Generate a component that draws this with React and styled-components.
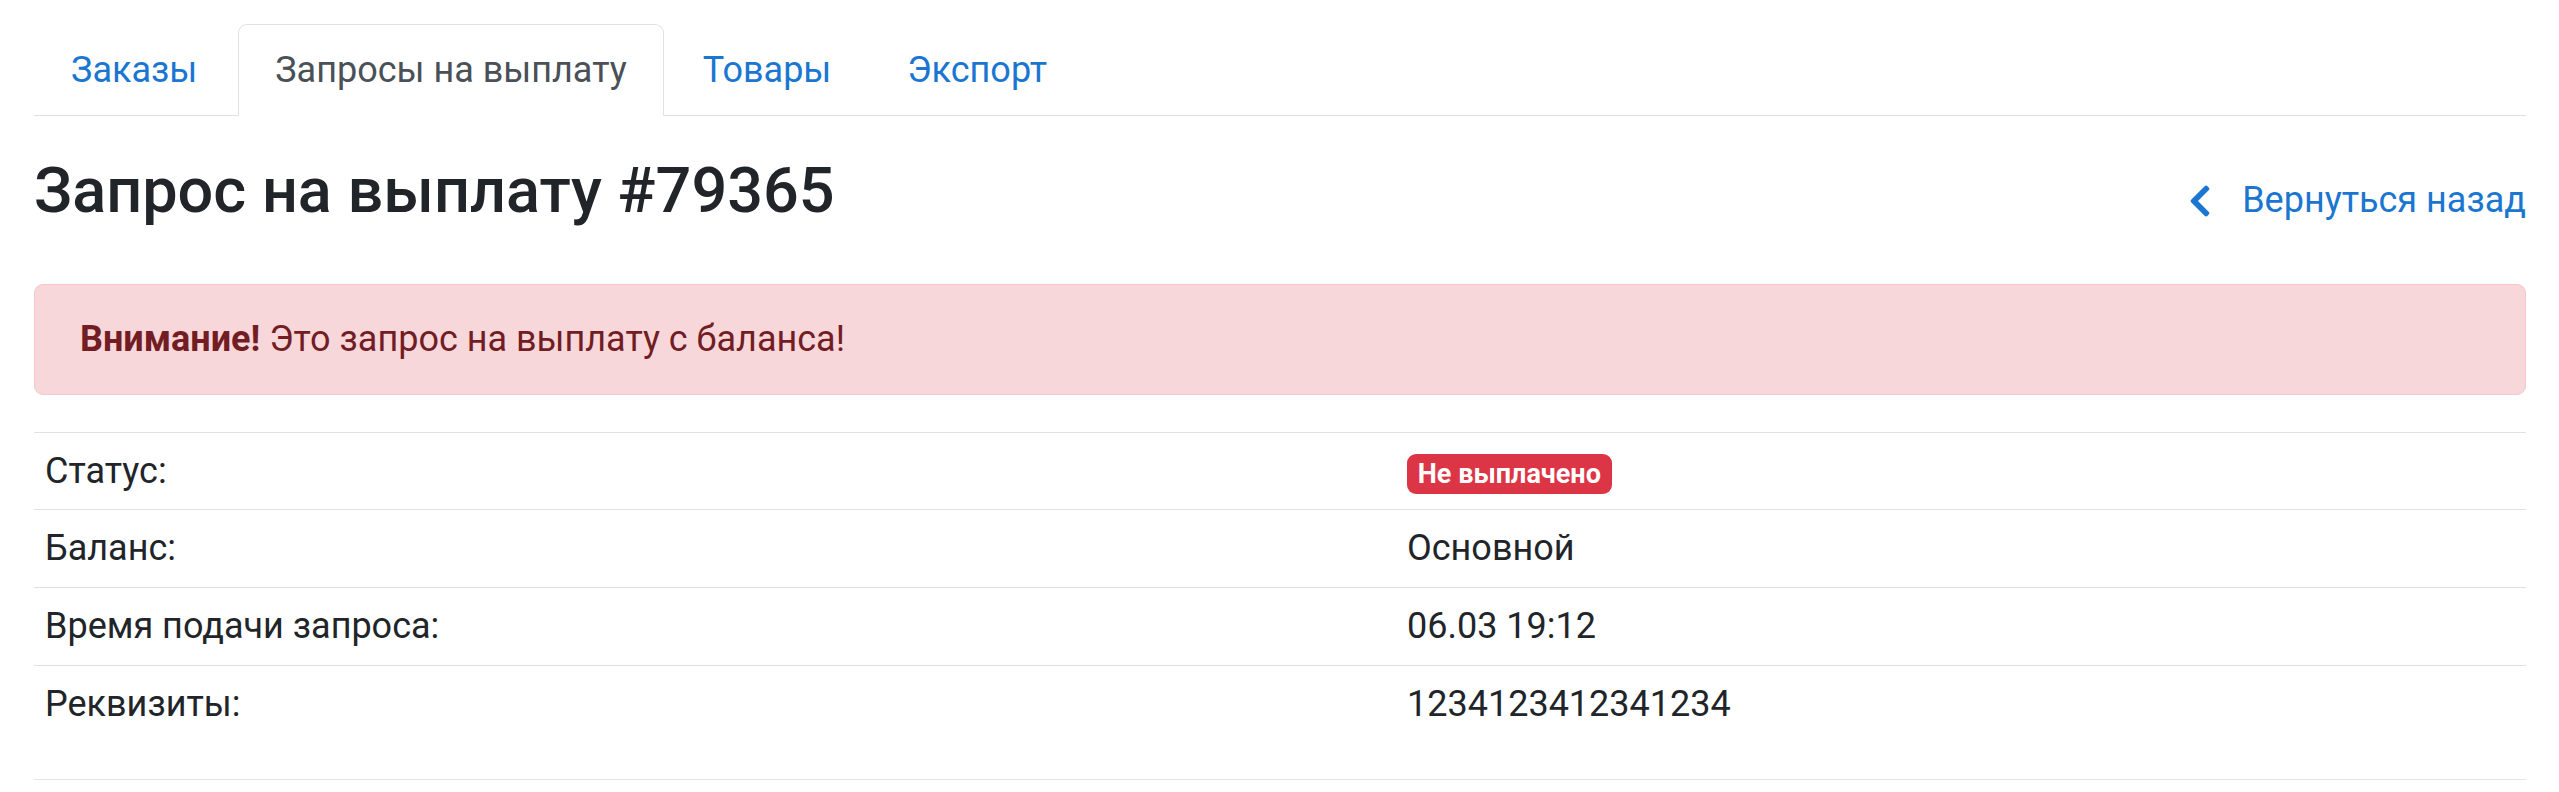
import styled, { createGlobalStyle } from 'styled-components';

const GlobalStyle = createGlobalStyle`
  body {
    margin: 0;
    background: #fff;
    font-family: Roboto, "Noto Sans", "Liberation Sans", sans-serif;
    font-size: 36px;
    line-height: 54px;
    color: #212529;
  }
`;

const tabs = [
  { title: 'Заказы' },
  { title: 'Запросы на выплату', active: true },
  { title: 'Товары' },
  { title: 'Экспорт' },
];

const details = [
  { label: 'Статус:', badge: 'Не выплачено' },
  { label: 'Баланс:', value: 'Основной' },
  { label: 'Время подачи запроса:', value: '06.03 19:12' },
  { label: 'Реквизиты:', value: '1234123412341234' },
];

function ChevronLeft() {
  return (
    <BackIcon viewBox="20 30 280 452" aria-hidden="true">
      <path
        fill="currentColor"
        d="M34.52 239.03L228.87 44.69c9.37-9.37 24.57-9.37 33.94 0l22.67 22.67c9.36 9.36 9.37 24.52.04 33.9L131.49 256l154.02 154.75c9.34 9.38 9.32 24.54-.04 33.9l-22.67 22.67c-9.37 9.37-24.57 9.37-33.94 0L34.52 272.97c-9.37-9.37-9.37-24.57 0-33.94z"
      />
    </BackIcon>
  );
}

function App() {
  return (
    <Page>
      <GlobalStyle />
      <TabList>
        {tabs.map((tab) => (
          <Tab key={tab.title} $active={tab.active}>{tab.title}</Tab>
        ))}
      </TabList>

      <Header>
        <Title>Запрос на выплату #79365</Title>
        <BackLink href="#">
          <ChevronLeft />
          Вернуться назад
        </BackLink>
      </Header>

      <Alert>
        <strong>Внимание!</strong> Это запрос на выплату с баланса!
      </Alert>

      <Table>
        {details.map((row) => (
          <Row key={row.label}>
            <Cell>{row.label}</Cell>
            <Cell>{row.badge ? <Badge>{row.badge}</Badge> : row.value}</Cell>
          </Row>
        ))}
      </Table>
      <Divider />
    </Page>
  );
}

const Page = styled.div`
  padding: 24px 33px 0 34px;
`;

const TabList = styled.nav`
  display: flex;
  gap: 2px;
  border-bottom: 1px solid #dee2e6;
`;

const Tab = styled.a`
  display: block;
  margin-bottom: -1px;
  padding: 18px 36px;
  border: 1px solid transparent;
  border-radius: 9px 9px 0 0;
  color: #1a76d0;
  text-decoration: none;

  &:first-child {
    margin-right: 2px;
  }

  ${({ $active }) => $active && `
    color: #495057;
    background: #fff;
    border-color: #dee2e6 #dee2e6 #fff;
  `}
`;

const Header = styled.div`
  display: flex;
  justify-content: space-between;
  align-items: baseline;
  margin: 37px 0 55px;
`;

const Title = styled.h2`
  margin: 0;
  font-size: 63px;
  line-height: 1.2;
  font-weight: 500;
  color: #212529;
`;

const BackLink = styled.a`
  display: flex;
  align-items: baseline;
  gap: 32px;
  color: #1a76d0;
  text-decoration: none;
`;

const BackIcon = styled.svg`
  flex-shrink: 0;
  width: 20px;
  height: 32px;
  align-self: center;
  position: relative;
  top: 1px;
`;

const Alert = styled.div`
  padding: 27px 45px 28px;
  margin-bottom: 37px;
  background: #f8d7da;
  border: 1px solid #f5c6cb;
  border-radius: 9px;
  color: #721c24;

  strong {
    font-weight: 700;
  }
`;

const Table = styled.div`
  margin-bottom: 36px;
`;

const Row = styled.div`
  display: grid;
  grid-template-columns: 1362px 1fr;
  border-top: 1px solid #dee2e6;
`;

const Cell = styled.div`
  padding: 11px 11px 11.8px;
`;

const Badge = styled.span`
  display: inline-block;
  padding: 6.75px 10.8px;
  font-size: 27px;
  font-weight: 700;
  line-height: 1;
  color: #fff;
  background: #dc3545;
  border-radius: 9px;
`;

const Divider = styled.hr`
  margin: 0;
  border: 0;
  border-top: 1px solid #e3e3e3;
`;

export default App;
